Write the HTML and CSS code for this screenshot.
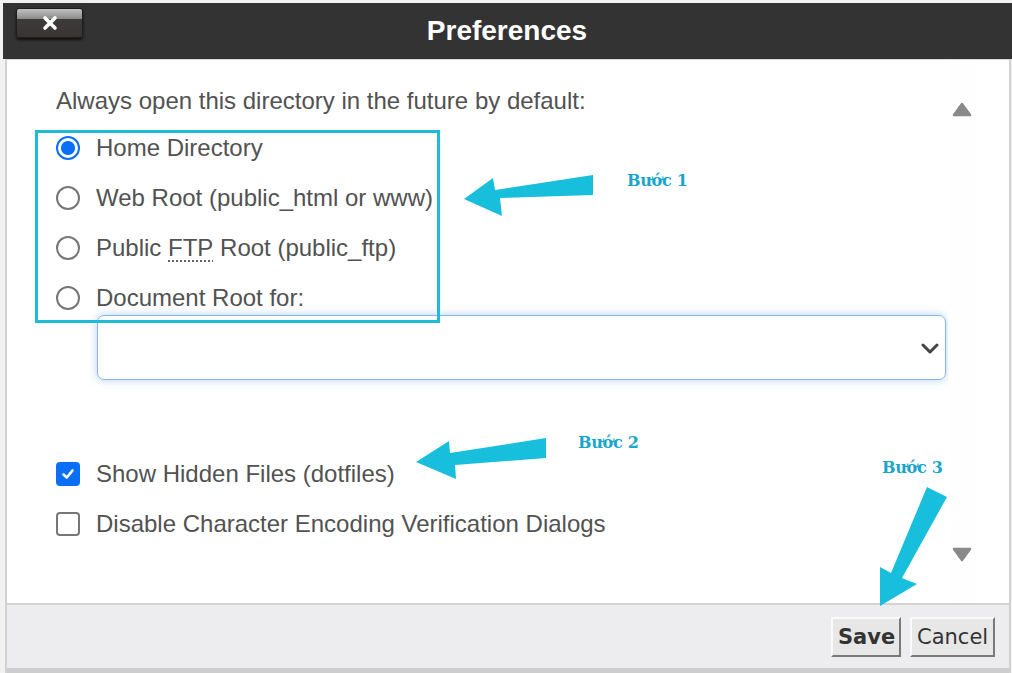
FILE: index.html
```html
<!DOCTYPE html>
<html lang="vi">
<head>
<meta charset="utf-8">
<title>Preferences</title>
<link rel="stylesheet" href="styles.css">
</head>
<body>
<div class="dialog">
  <header class="titlebar">
    <button class="close" aria-label="Close">
      <svg width="16" height="16" viewBox="0 0 16 16"><path d="M3 3 L13 13 M13 3 L3 13" stroke="#fff" stroke-width="3.6" stroke-linecap="round"/></svg>
    </button>
    <h1 class="title">Preferences</h1>
    <span class="spacer"></span>
  </header>
  <div class="panel">
    <div class="content">
      <div class="main">
        <p class="lead">Always open this directory in the future by default:</p>
        <ul class="options">
          <li class="opt"><span class="radio checked"></span>Home Directory</li>
          <li class="opt"><span class="radio"></span>Web Root (public_html or www)</li>
          <li class="opt"><span class="radio"></span>Public&nbsp;<abbr class="abbr">FTP</abbr>&nbsp;Root (public_ftp)</li>
          <li class="opt"><span class="radio"></span>Document Root for:</li>
        </ul>
        <div class="select">
          <svg class="chev" width="18" height="11" viewBox="0 0 18 11"><path d="M2 2 L9 9 L16 2" fill="none" stroke="#444" stroke-width="3" stroke-linecap="round" stroke-linejoin="round"/></svg>
        </div>
        <ul class="checks">
          <li class="opt"><span class="check checked"><svg width="16" height="16" viewBox="0 0 16 16"><path d="M3.5 8.5 L6.8 11.5 L12.5 4.5" fill="none" stroke="#fff" stroke-width="2.6" stroke-linecap="round" stroke-linejoin="round"/></svg></span>Show Hidden Files (dotfiles)</li>
          <li class="opt"><span class="check"></span>Disable Character Encoding Verification Dialogs</li>
        </ul>
      </div>
      <div class="scroll">
        <svg width="20" height="15" viewBox="0 0 20 15"><polygon points="10,2 18,13 2,13" fill="#898989" stroke="#898989" stroke-width="2.5" stroke-linejoin="round"/></svg>
        <svg width="20" height="15" viewBox="0 0 20 15"><polygon points="2,2 18,2 10,13" fill="#898989" stroke="#898989" stroke-width="2.5" stroke-linejoin="round"/></svg>
      </div>
    </div>
    <footer class="footer">
      <button class="btn save">Save</button>
      <button class="btn">Cancel</button>
    </footer>
  </div>

  <div class="annot">
    <div class="hl-box"></div>
    <svg class="arrows" width="1012" height="673" viewBox="0 0 1012 673">
      <polygon points="593,175 593,195 500,198 502,216 464,199 493,178 495,190" fill="#17bfdc"/>
      <polygon points="546,438 546,458 455,465 456,479 416,462 449,441 450,453" fill="#17bfdc"/>
      <polygon points="927,487 947,497 902,578 917,584 880,606 880,567 891,573" fill="#17bfdc"/>
    </svg>
    <span class="step step1">Bước 1</span>
    <span class="step step2">Bước 2</span>
    <span class="step step3">Bước 3</span>
  </div>
</div>
</body>
</html>
```

FILE: styles.css
```css
html, body {
  margin: 0;
  padding: 0;
}
body {
  background: #f3f3f3;
  font-family: "Liberation Sans", Arial, sans-serif;
}
.dialog {
  position: relative;
  width: 1012px;
  height: 673px;
  box-sizing: border-box;
  padding-top: 3px;
  background: #f2f2f2;
  display: flex;
  flex-direction: column;
  overflow: hidden;
}
.titlebar {
  height: 56px;
  flex: none;
  background: #333333;
  margin-left: 3px;
  display: grid;
  grid-template-columns: 1fr auto 1fr;
  align-items: center;
}
.close {
  justify-self: start;
  align-self: start;
  margin: 5px 0 0 13px;
  width: 67px;
  height: 30px;
  padding: 0;
  border: 1px solid #1e1e1e;
  border-radius: 3px;
  background: linear-gradient(#c2c2c2 0%, #8c8c8c 34%, #3f3a3a 36%, #3a3535 100%);
  box-shadow: 0 2px 3px rgba(0, 0, 0, 0.7);
  display: flex;
  align-items: center;
  justify-content: center;
}
.title {
  margin: 0;
  color: #ffffff;
  font-family: "Liberation Sans", Arial, sans-serif;
  font-weight: bold;
  font-size: 28px;
  line-height: 32px;
  padding-top: 0;
  margin-left: -1px;
}
.panel {
  flex: 1;
  display: flex;
  flex-direction: column;
  margin-left: 5px;
  margin-right: 1px;
  border-left: 2px solid #d2d2d2;
  border-right: 2px solid #d2d2d2;
}
.content {
  flex: 1;
  display: flex;
  background: #ffffff;
  border-top: 1px solid #d8d8d8;
}
.main {
  flex: 1;
  padding: 27px 0 0 49px;
  color: #525252;
  font-size: 24px;
  line-height: 28px;
}
.lead {
  margin: 0;
}
.options, .checks {
  list-style: none;
  margin: 8px 0 0 0;
  padding: 0;
}
.checks {
  margin-top: 69px;
}
.opt {
  height: 50px;
  display: flex;
  align-items: center;
  white-space: pre;
}
.radio {
  width: 24px;
  height: 24px;
  box-sizing: border-box;
  border: 2px solid #767676;
  border-radius: 50%;
  margin-right: 16px;
  flex: none;
  background: #fff;
}
.radio.checked {
  border-color: #0b6ff5;
  background: radial-gradient(circle, #0b6ff5 0 6.5px, #ffffff 7.5px);
}
.abbr {
  text-decoration: underline dotted #666;
  text-underline-offset: 4px;
  text-decoration-thickness: 1.5px;
}
.select {
  margin: -8px 0 0 41px;
  width: 849px;
  height: 65px;
  box-sizing: border-box;
  border: 1.5px solid #86b5e8;
  border-radius: 7px;
  box-shadow: 0 0 8px rgba(110, 165, 230, 0.5);
  display: flex;
  align-items: center;
  justify-content: flex-end;
  padding-right: 6px;
  padding-top: 2px;
}
.check {
  width: 24px;
  height: 24px;
  box-sizing: border-box;
  border: 2px solid #777;
  border-radius: 4px;
  margin-right: 16px;
  flex: none;
  display: flex;
  align-items: center;
  justify-content: center;
}
.check.checked {
  border: none;
  background: #0b6ff5;
}
.scroll {
  width: 28px;
  margin-right: 33px;
  padding: 42px 0 41px;
  display: flex;
  flex-direction: column;
  align-items: center;
  justify-content: space-between;
  background: #fefefe;
}
.footer {
  height: 63px;
  flex: none;
  background: #ededef;
  border-top: 2px solid #d3d3d3;
  border-bottom: 5px solid #cdcdcd;
  display: flex;
  justify-content: flex-end;
  align-items: center;
  gap: 9px;
  padding-right: 14px;
}
.btn {
  height: 40px;
  padding: 0 5px;
  background: #e7e7e7;
  border: 2px solid;
  border-color: #fafafa #7a7a7a #7a7a7a #fafafa;
  color: #333333;
  font-family: "DejaVu Sans", Verdana, sans-serif;
  font-size: 21px;
  line-height: 34px;
}
.save {
  width: 70px;
  font-weight: bold;
}
.btn:not(.save) {
  width: 85px;
}
.annot {
  position: absolute;
  inset: 0;
  pointer-events: none;
}
.hl-box {
  position: absolute;
  left: 35px;
  top: 130px;
  width: 399px;
  height: 187px;
  border: 3px solid #1cbcd9;
}
.arrows {
  position: absolute;
  left: 0;
  top: 0;
}
.step {
  position: absolute;
  font-family: "DejaVu Serif", "Liberation Serif", serif;
  font-weight: bold;
  font-size: 16px;
  line-height: 18px;
  color: #1aa5cb;
  white-space: nowrap;
  letter-spacing: -0.3px;
}
.step1 { left: 627px; top: 172px; }
.step2 { left: 578px; top: 434px; }
.step3 { left: 882px; top: 459px; }
```
